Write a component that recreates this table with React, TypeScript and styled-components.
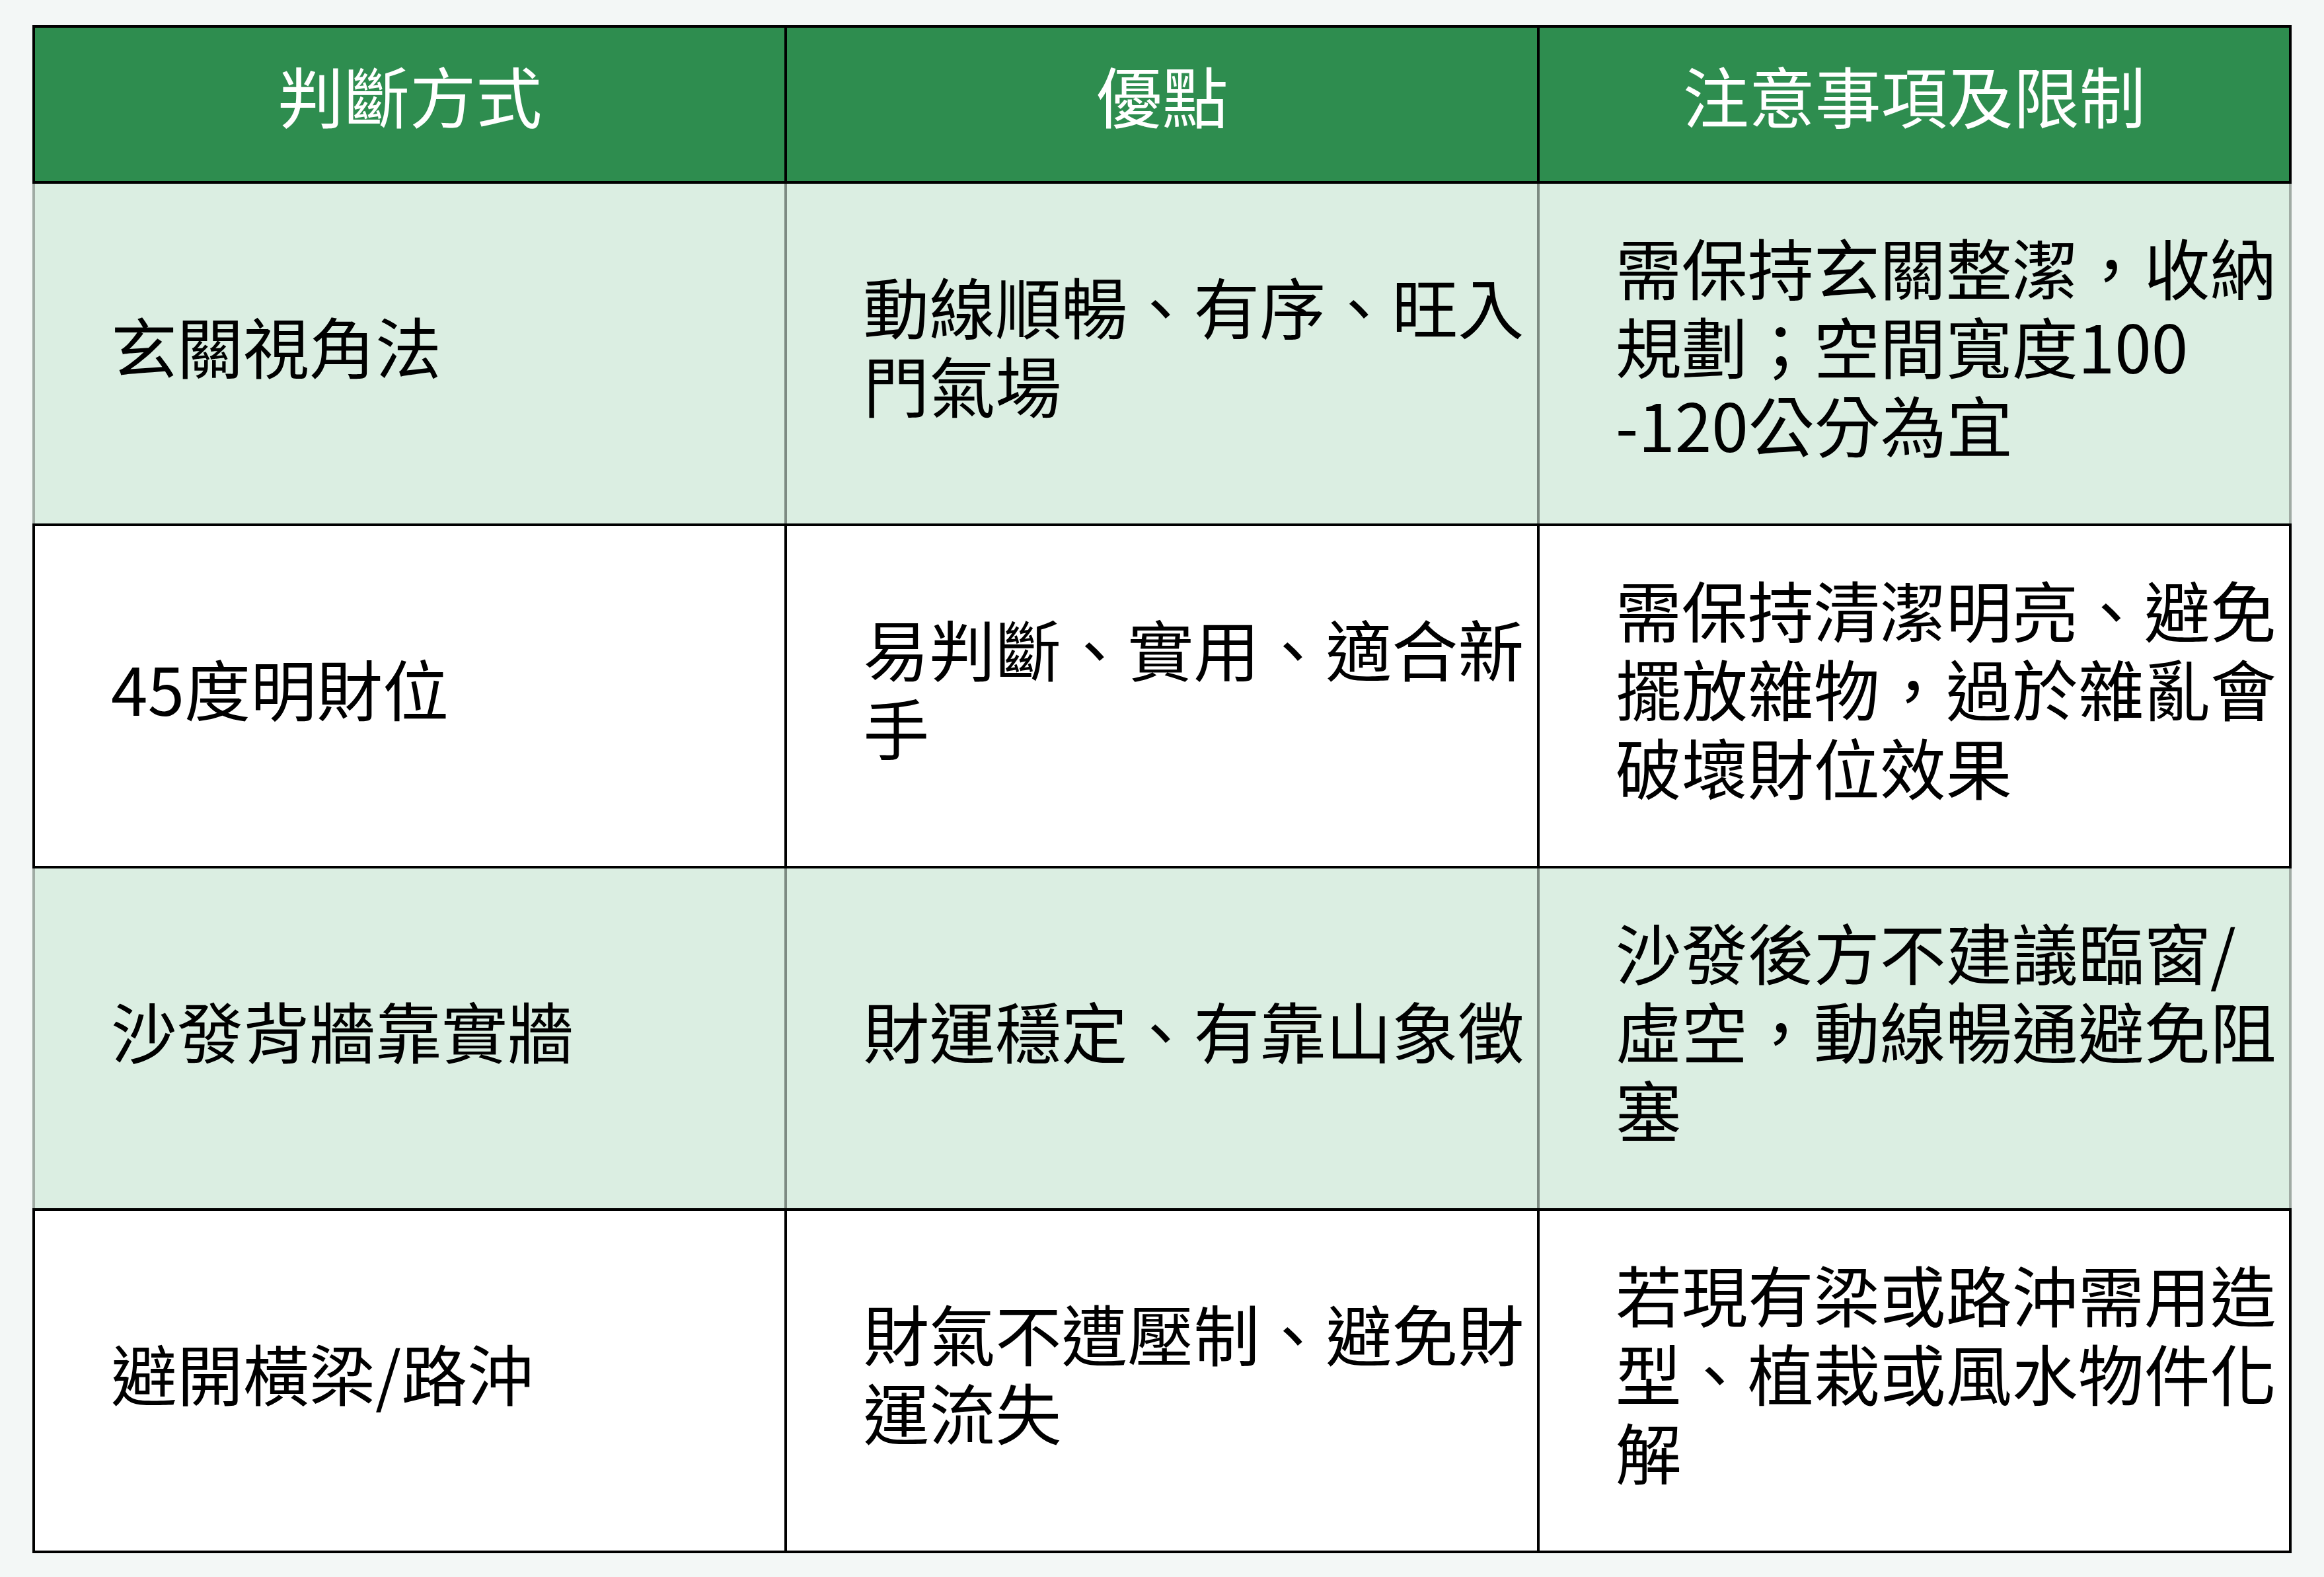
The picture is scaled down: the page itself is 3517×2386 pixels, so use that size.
import React from "react";
import styled, { createGlobalStyle } from "styled-components";

const GlobalStyle = createGlobalStyle`
  html, body {
    margin: 0;
    padding: 0;
    background: #f3f7f6;
  }
  body {
    font-family: "Noto Sans CJK TC", "Noto Sans", sans-serif;
  }
`;

const rows = [
  {
    method: "玄關視角法",
    pros: "動線順暢、有序、旺入門氣場",
    notes: "需保持玄關整潔，收納規劃；空間寬度100\u200B-120公分為宜",
  },
  {
    method: "45度明財位",
    pros: "易判斷、實用、適合新手",
    notes: "需保持清潔明亮、避免擺放雜物，過於雜亂會破壞財位效果",
  },
  {
    method: "沙發背牆靠實牆",
    pros: "財運穩定、有靠山象徵",
    notes: "沙發後方不建議臨窗/虛空，動線暢通避免阻塞",
  },
  {
    method: "避開橫梁/路沖",
    pros: "財氣不遭壓制、避免財運流失",
    notes: "若現有梁或路沖需用造型、植栽或風水物件化解",
  },
];

const App = () => {
  return (
    <Page>
      <GlobalStyle />
      <Table>
        <colgroup>
          <col />
          <col />
          <col />
        </colgroup>
        <thead>
          <HeadRow>
            <HeadCell>判斷方式</HeadCell>
            <HeadCell>優點</HeadCell>
            <HeadCell>注意事項及限制</HeadCell>
          </HeadRow>
        </thead>
        <tbody>
          {rows.map((r, i) => (
            <BodyRow key={r.method} $tinted={i % 2 === 0}>
              <Cell>{r.method}</Cell>
              <Cell>{r.pros}</Cell>
              <Cell>{r.notes}</Cell>
            </BodyRow>
          ))}
        </tbody>
      </Table>
    </Page>
  );
};

export default App;

const Page = styled.div`
  padding: 38px 49px 40px;
`;

const Table = styled.table`
  width: 100%;
  table-layout: fixed;
  border-collapse: collapse;
  border: 4px solid #000;

  col {
    width: 33.333%;
  }
`;

const HeadRow = styled.tr`
  height: 236px;
  background: #2e8d4f;
`;

const HeadCell = styled.th`
  border: 4px solid #000;
  color: #ffffff;
  font-size: 100px;
  font-weight: 400;
  line-height: 1.2;
  text-align: center;
  vertical-align: middle;
  padding: 0 20px 30px;
`;

const BodyRow = styled.tr<{ $tinted: boolean }>`
  height: 518px;
  background: ${(p) => (p.$tinted ? "#dbeee2" : "#ffffff")};

  td {
    border-left-color: ${(p) => (p.$tinted ? "#7d8a82" : "#000")};
    border-right-color: ${(p) => (p.$tinted ? "#7d8a82" : "#000")};
  }
  td:first-child {
    border-left-color: ${(p) => (p.$tinted ? "#a0aba4" : "#000")};
  }
  td:last-child {
    border-right-color: ${(p) => (p.$tinted ? "#a0aba4" : "#000")};
  }
`;

const Cell = styled.td`
  border: 4px solid #000;
  color: #000;
  font-size: 100px;
  font-weight: 400;
  line-height: 1.19;
  text-align: left;
  vertical-align: middle;
  padding: 0 18px 28px 115px;
`;
